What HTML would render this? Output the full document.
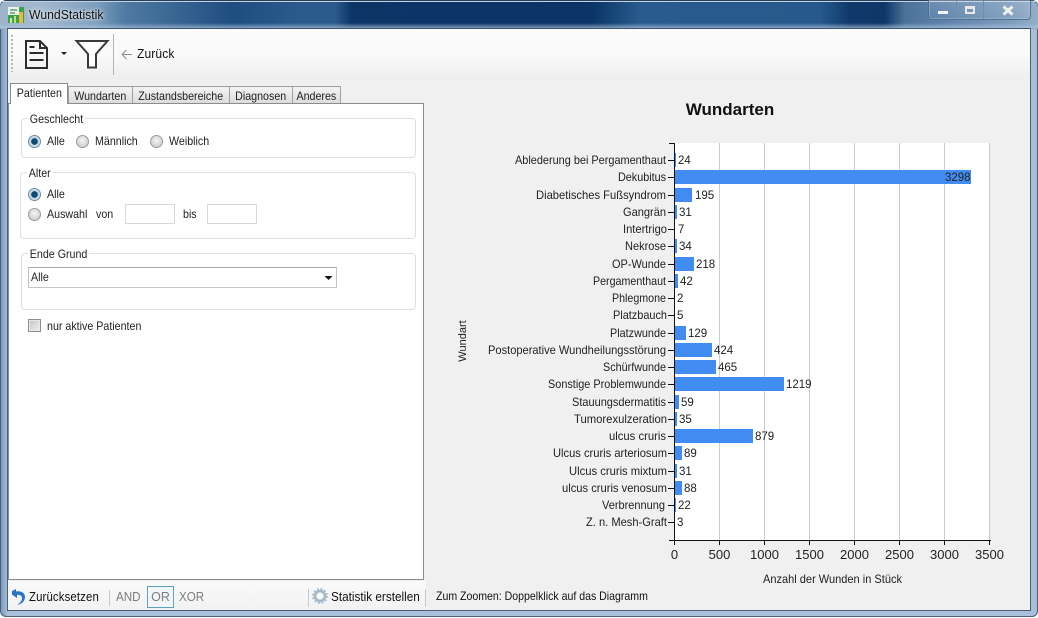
<!DOCTYPE html>
<html><head><meta charset="utf-8"><style>
html,body{margin:0;padding:0;width:1038px;height:618px;overflow:hidden;background:#fff}
body{font-family:"Liberation Sans",sans-serif;font-size:12px;color:#222;position:relative}
.a{position:absolute;white-space:nowrap}
.s{transform:scaleX(.89);transform-origin:0 0}
.tab{position:absolute;top:86px;height:16px;line-height:18px;text-align:center;background:linear-gradient(#f4f4f4,#dcdcdc);border:1px solid #a0a0a0;border-bottom:0;box-sizing:content-box}
.tab span{display:inline-block;transform:scaleX(.89)}
.gb{position:absolute;border:1px solid #d8e0e4;border-radius:4px;box-sizing:border-box}
.gl{position:absolute;background:#fff;padding:0 2px;line-height:14px;white-space:nowrap}
.r{position:absolute;width:11px;height:11px;border-radius:50%;border:1px solid #9a9a9a;background:radial-gradient(circle at 50% 40%,#f4f4f4,#c4c4c4);}
.r.c{border-color:#6a8aa0;background:radial-gradient(circle,#0e4a72 0 3px,#bcd4e4 3.6px,#eef4f8 100%)}
.in{position:absolute;border:1px solid #d8d8d8;background:#fff;box-sizing:border-box}
svg text{font-family:"Liberation Sans",sans-serif}
</style></head><body>
<!-- window frame -->
<div class="a" style="left:0;top:0;width:1038px;height:617px;box-sizing:border-box;border:1px solid #4a5f78;background:linear-gradient(90deg,#7e9cbd 0,#a9c0da 7px,#a9c0da 1031px,#a6bdd6 100%);border-radius:6px"></div>
<div class="a" style="left:0;top:0;width:1038px;height:29px;border-radius:7px 7px 0 0;border-top:1px solid #27405c;box-sizing:border-box;background:linear-gradient(90deg,#9db4cb 0,#a2b8ce 40px,#7f9fbf 95px,#4f7aa3 125px,#1f4d80 233px,#2c5a8c 300px,#2c5a8c 335px,#0d3566 352px,#0b3366 590px,#12406f 606px,#2a5b8e 640px,#27598c 820px,#10396a 850px,#0f3869 885px,#4d7299 905px,#5a7fa8 935px,#7d9cbc 1010px,#94aec8 100%)"></div>
<div class="a" style="left:1px;top:1px;width:1036px;height:1px;background:#c4d2e0"></div>
<div class="a" style="left:0;top:23px;width:1038px;height:5px;background:linear-gradient(rgba(150,180,210,0),rgba(170,195,220,.7))"></div>
<!-- title icon -->
<svg class="a" style="left:7px;top:6px" width="18" height="18" viewBox="0 0 18 18"><rect x="1" y="1" width="16" height="16" fill="#39a24a"/><rect x="1" y="1" width="11" height="8" fill="#e8f4e8"/><path d="M3 4h7M3 7h5" stroke="#1d7a3a"/><rect x="3" y="12" width="2" height="5" fill="#cfe9a0"/><rect x="7" y="10" width="2" height="7" fill="#bfe080"/><rect x="12" y="6" width="4" height="11" fill="#e7b93a"/></svg>
<div class="a" style="left:29px;top:7px;font-size:13px;color:#111;transform:scaleX(.94);transform-origin:0 0;text-shadow:0 0 6px rgba(255,255,255,.85),0 0 3px rgba(255,255,255,.7)">WundStatistik</div>
<!-- caption buttons -->
<div class="a" style="left:928px;top:0;width:103px;height:20px;box-sizing:border-box;border:1px solid #50708f;border-top:0;border-radius:0 0 4px 4px;background:linear-gradient(rgba(255,255,255,.12),rgba(255,255,255,.05));box-shadow:inset 0 0 0 1px rgba(190,210,230,.35)"></div>
<div class="a" style="left:956px;top:1px;width:1px;height:18px;background:#6f8eae"></div>
<div class="a" style="left:983px;top:1px;width:1px;height:18px;background:#6f8eae"></div>
<div class="a" style="left:938px;top:11px;width:10px;height:3px;background:#f4f4f4"></div>
<div class="a" style="left:965px;top:6px;box-sizing:content-box;width:6px;height:3px;border:2px solid #e8e8e8;border-top-width:3px"></div>
<svg class="a" style="left:1001px;top:5px" width="14" height="11" viewBox="0 0 14 11"><path d="M2.500 1.500l9 8M11.500 1.500l-9 8" stroke="#f0f0f0" stroke-width="3"/></svg>
<!-- client -->
<div class="a" style="left:7px;top:28px;width:1024px;height:583px;background:#f0f0f0;border:1px solid #4a5f78;box-sizing:border-box;border-top:1px solid #3c5270"></div>
<!-- toolbar -->
<div class="a" style="left:8px;top:29px;width:1022px;height:50px;background:linear-gradient(#fbfbfb,#fafafa 50%,#eeeeee)"></div>
<div class="a" style="left:11px;top:35px;width:2px;height:37px;background:repeating-linear-gradient(#b8b8b8 0 2px,transparent 2px 4px)"></div>
<svg class="a" style="left:22px;top:38px" width="30" height="32" viewBox="0 0 30 32"><path d="M4 3h14l7 7v20H4z M18 3v7h7 M7.500 9h5 M7.500 15h14 M7.500 22h14" fill="none" stroke="#2c2c2c" stroke-width="2"/></svg>
<svg class="a" style="left:60px;top:51px" width="8" height="5"><path d="M1 1h6l-3 3z" fill="#222"/></svg>
<svg class="a" style="left:74px;top:38px" width="36" height="32" viewBox="0 0 36 32"><path d="M2.500 3h31L22 16v13.500H14V16z" fill="#fdfdfd" stroke="#3a3a3a" stroke-width="2"/></svg>
<div class="a" style="left:113px;top:34px;width:1px;height:41px;background:#b4b4b4"></div>
<svg class="a" style="left:120px;top:48px" width="14" height="13" viewBox="0 0 14 13"><path d="M12 6.500H2M6.500 2L2 6.500 6.500 11" fill="none" stroke="#8c8c8c" stroke-width="1"/></svg>
<div class="a" style="left:137px;top:47px;font-size:12.500px;color:#111;transform:scaleX(.96);transform-origin:0 0;letter-spacing:.15px">Zurück</div>
<!-- tabs -->
<div class="a" style="left:8px;top:79px;width:422px;height:500px;background:#f0f0f0"></div>
<div class="tab" style="left:68px;width:63px"><span>Wundarten</span></div>
<div class="tab" style="left:132px;width:96px"><span>Zustandsbereiche</span></div>
<div class="tab" style="left:229px;width:62px"><span>Diagnosen</span></div>
<div class="tab" style="left:292px;width:47px"><span>Anderes</span></div>
<div class="a" style="left:8px;top:103px;width:416px;height:477px;background:#fff;border:1px solid #8c8c8c;box-sizing:border-box"></div>
<div class="a" style="left:10px;top:83px;width:58px;height:21px;background:#fff;border:1px solid #8c8c8c;border-bottom:0;box-sizing:border-box;text-align:center;line-height:18px"><span style="display:inline-block;transform:scaleX(.89)">Patienten</span></div>
<!-- Geschlecht -->
<div class="gb" style="left:21px;top:118px;width:395px;height:40px"></div>
<div class="gl s" style="left:28px;top:112px">Geschlecht</div>
<div class="r c" style="left:28px;top:135px"></div><div class="a s" style="left:47px;top:134px">Alle</div>
<div class="r" style="left:76px;top:135px"></div><div class="a s" style="left:95px;top:134px">Männlich</div>
<div class="r" style="left:150px;top:135px"></div><div class="a s" style="left:169px;top:134px">Weiblich</div>
<!-- Alter -->
<div class="gb" style="left:20px;top:172px;width:396px;height:67px"></div>
<div class="gl s" style="left:27px;top:166px">Alter</div>
<div class="r c" style="left:28px;top:188px"></div><div class="a s" style="left:47px;top:187px">Alle</div>
<div class="r" style="left:28px;top:208px"></div><div class="a s" style="left:47px;top:207px">Auswahl</div>
<div class="a s" style="left:96px;top:207px">von</div>
<div class="in" style="left:125px;top:204px;width:50px;height:20px"></div>
<div class="a s" style="left:183px;top:207px">bis</div>
<div class="in" style="left:207px;top:204px;width:50px;height:20px"></div>
<!-- Ende Grund -->
<div class="gb" style="left:21px;top:253px;width:395px;height:57px"></div>
<div class="gl s" style="left:28px;top:247px">Ende Grund</div>
<div class="in" style="left:28px;top:267px;width:309px;height:21px;border-color:#c4c4c4;border-top-color:#a8a8a8"></div>
<div class="a s" style="left:31px;top:270px">Alle</div>
<svg class="a" style="left:324px;top:275px" width="9" height="6"><path d="M0.500 1h8l-4 4z" fill="#111"/></svg>
<!-- checkbox -->
<div class="a" style="left:28px;top:319px;width:13px;height:13px;box-sizing:border-box;border:1px solid #8e8e8e;background:linear-gradient(135deg,#c4c4c4,#f0f0f0);box-shadow:inset 0 0 0 1px #e8e8e8"></div>
<div class="a s" style="left:47px;top:319px">nur aktive Patienten</div>
<!-- bottom toolbar -->
<div class="a" style="left:8px;top:581px;width:418px;height:29px;background:linear-gradient(#fafafa,#f2f2f2)"></div>
<svg class="a" style="left:11px;top:588px" width="15" height="18" viewBox="0 0 15 18"><path d="M1 3L5 1v2.500C10 2.500 14 5 14 9c0 4-3 7-8 8 3-2 5-4 5-7 0-2-2-3.500-5-3v3L1 6.500z" fill="#2b74c4"/></svg>
<div class="a" style="left:29px;top:590px;font-size:12.500px;color:#111;letter-spacing:.15px;transform:scaleX(.91);transform-origin:0 0">Zurücksetzen</div>
<div class="a" style="left:109px;top:590px;width:1px;height:16px;background:#c8c8c8"></div>
<div class="a" style="left:116px;top:590px;font-size:12.500px;color:#7c7c7c;transform:scaleX(.93);transform-origin:0 0">AND</div>
<div class="a" style="left:147px;top:586px;width:27px;height:22px;box-sizing:border-box;border:1px solid #5fa0bf;background:#f0f6fa;text-align:center;line-height:20px;font-size:12.500px;color:#7c7c7c">OR</div>
<div class="a" style="left:179px;top:590px;font-size:12.500px;color:#7c7c7c;transform:scaleX(.93);transform-origin:0 0">XOR</div>
<div class="a" style="left:308px;top:589px;width:1px;height:18px;background:#c8c8c8"></div>
<svg class="a" style="left:312px;top:588px" width="17" height="17" viewBox="0 0 17 17"><circle cx="8" cy="8" r="5" fill="#e8eef2" stroke="#a4b8c6" stroke-width="2.400"/><circle cx="8" cy="8" r="7" fill="none" stroke="#a8bcca" stroke-width="1.800" stroke-dasharray="2 1.700"/><circle cx="8" cy="8" r="2.500" fill="#fff"/></svg>
<div class="a" style="left:331px;top:590px;font-size:12.500px;color:#111;transform:scaleX(.94);transform-origin:0 0">Statistik erstellen</div>
<div class="a" style="left:425px;top:589px;width:1px;height:18px;background:#c8c8c8"></div>
<div class="a" style="left:436px;top:589px;font-size:12px;color:#111;transform:scaleX(.88);transform-origin:0 0">Zum Zoomen: Doppelklick auf das Diagramm</div>
<!-- chart -->
<svg class="a" style="left:430px;top:90px" width="600" height="510" viewBox="430 90 600 510">
<rect x="674" y="143" width="316" height="397" fill="#fff"/>
<g stroke="#cdcdcd" stroke-width="1"><path d="M719.500 143v397M764.500 143v397M809.500 143v397M854.500 143v397M899.500 143v397M944.500 143v397M989.500 143v397"/></g>
<g fill="#418cf0">
<rect x="674" y="153" width="2" height="14"/><rect x="674" y="170" width="297" height="14"/><rect x="674" y="188" width="18" height="14"/><rect x="674" y="205" width="3" height="14"/><rect x="674" y="222" width="1" height="14"/><rect x="674" y="239" width="3" height="14"/><rect x="674" y="257" width="20" height="14"/><rect x="674" y="274" width="4" height="14"/><rect x="674" y="291" width="1" height="14"/><rect x="674" y="308" width="1" height="14"/><rect x="674" y="326" width="12" height="14"/><rect x="674" y="343" width="38" height="14"/><rect x="674" y="360" width="42" height="14"/><rect x="674" y="377" width="110" height="14"/><rect x="674" y="395" width="5" height="14"/><rect x="674" y="412" width="3" height="14"/><rect x="674" y="429" width="79" height="14"/><rect x="674" y="446" width="8" height="14"/><rect x="674" y="464" width="3" height="14"/><rect x="674" y="481" width="8" height="14"/><rect x="674" y="498" width="2" height="14"/><rect x="674" y="515" width="1" height="14"/>
</g>
<g stroke="#111" stroke-width="1" fill="none"><path d="M669 143.500h5M668 160.500h6M668 177.500h6M668 195.500h6M668 212.500h6M668 229.500h6M668 246.500h6M668 264.500h6M668 281.500h6M668 298.500h6M668 315.500h6M668 333.500h6M668 350.500h6M668 367.500h6M668 384.500h6M668 402.500h6M668 419.500h6M668 436.500h6M668 453.500h6M668 471.500h6M668 488.500h6M668 505.500h6M668 522.500h6"/>
<path d="M669 540.500h322M674.500 143v402M719.500 540v5M764.500 540v5M809.500 540v5M854.500 540v5M899.500 540v5M944.500 540v5M989.500 540v5"/></g>
<g font-size="12" fill="#222" text-anchor="end" lengthAdjust="spacingAndGlyphs">
<text x="666" y="164" textLength="151" lengthAdjust="spacingAndGlyphs">Ablederung bei Pergamenthaut</text>
<text x="666" y="181" textLength="48" lengthAdjust="spacingAndGlyphs">Dekubitus</text>
<text x="666" y="199" textLength="130" lengthAdjust="spacingAndGlyphs">Diabetisches Fußsyndrom</text>
<text x="666" y="216" textLength="43" lengthAdjust="spacingAndGlyphs">Gangrän</text>
<text x="667" y="233" textLength="44" lengthAdjust="spacingAndGlyphs">Intertrigo</text>
<text x="666" y="250" textLength="41" lengthAdjust="spacingAndGlyphs">Nekrose</text>
<text x="666" y="268" textLength="54" lengthAdjust="spacingAndGlyphs">OP-Wunde</text>
<text x="666" y="285" textLength="73" lengthAdjust="spacingAndGlyphs">Pergamenthaut</text>
<text x="666" y="302" textLength="54" lengthAdjust="spacingAndGlyphs">Phlegmone</text>
<text x="667" y="319" textLength="54" lengthAdjust="spacingAndGlyphs">Platzbauch</text>
<text x="666" y="337" textLength="56" lengthAdjust="spacingAndGlyphs">Platzwunde</text>
<text x="666" y="354" textLength="178" lengthAdjust="spacingAndGlyphs">Postoperative Wundheilungsstörung</text>
<text x="666" y="371" textLength="63" lengthAdjust="spacingAndGlyphs">Schürfwunde</text>
<text x="666" y="388" textLength="118" lengthAdjust="spacingAndGlyphs">Sonstige Problemwunde</text>
<text x="666" y="406" textLength="94" lengthAdjust="spacingAndGlyphs">Stauungsdermatitis</text>
<text x="667" y="423" textLength="93" lengthAdjust="spacingAndGlyphs">Tumorexulzeration</text>
<text x="666" y="440" textLength="57" lengthAdjust="spacingAndGlyphs">ulcus cruris</text>
<text x="667" y="457" textLength="114" lengthAdjust="spacingAndGlyphs">Ulcus cruris arteriosum</text>
<text x="667" y="475" textLength="98" lengthAdjust="spacingAndGlyphs">Ulcus cruris mixtum</text>
<text x="667" y="492" textLength="105" lengthAdjust="spacingAndGlyphs">ulcus cruris venosum</text>
<text x="665" y="509" textLength="63" lengthAdjust="spacingAndGlyphs">Verbrennung</text>
<text x="667" y="526" textLength="81" lengthAdjust="spacingAndGlyphs">Z. n. Mesh-Graft</text>
</g>
<g font-size="11.500" fill="#222">
<text x="678" y="164">24</text><text x="945" y="181">3298</text><text x="695" y="199">195</text><text x="679" y="216">31</text><text x="678" y="233">7</text><text x="679" y="250">34</text><text x="696" y="268">218</text><text x="680" y="285">42</text><text x="677" y="302">2</text><text x="677" y="319">5</text><text x="688" y="337">129</text><text x="714" y="354">424</text><text x="718" y="371">465</text><text x="786" y="388">1219</text><text x="681" y="406">59</text><text x="679" y="423">35</text><text x="755" y="440">879</text><text x="684" y="457">89</text><text x="679" y="475">31</text><text x="684" y="492">88</text><text x="678" y="509">22</text><text x="677" y="526">3</text>
</g>
<g font-size="13" fill="#222" text-anchor="middle">
<text x="674.500" y="559">0</text><text x="719.500" y="559">500</text><text x="764.500" y="559">1000</text><text x="809.500" y="559">1500</text><text x="854.500" y="559">2000</text><text x="899.500" y="559">2500</text><text x="944.500" y="559">3000</text><text x="989.500" y="559">3500</text>
</g>
<text x="832.500" y="583" font-size="12" fill="#222" text-anchor="middle" textLength="139" lengthAdjust="spacingAndGlyphs">Anzahl der Wunden in Stück</text>
<text transform="translate(466,341) rotate(-90)" font-size="11" fill="#222" text-anchor="middle">Wundart</text>
<text x="730" y="115" font-size="17" font-weight="bold" fill="#111" text-anchor="middle">Wundarten</text>
</svg>
</body></html>
